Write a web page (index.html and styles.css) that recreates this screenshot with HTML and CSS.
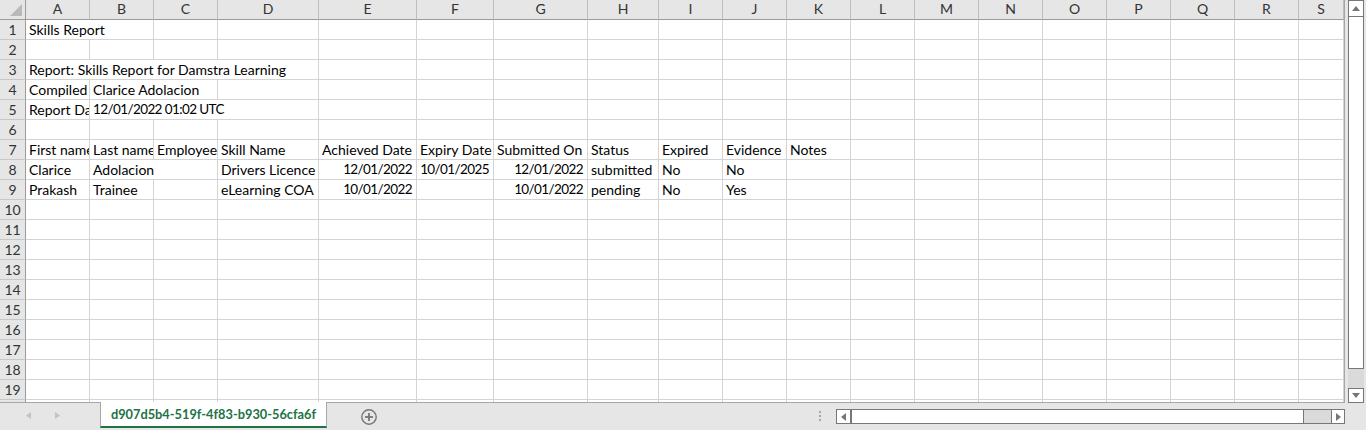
FILE: index.html
```html
<!DOCTYPE html>
<html lang="en">
<head>
    <meta charset="utf-8">
    <title>Skills Report</title>
    <link rel="stylesheet" href="styles.css">
</head>
<body>
<div class="main">
    <div class="sheet">
        <div class="grid" id="grid"></div>
    </div>
    <div class="vscroll">
        <div class="vbtn up">
            <svg width="8" height="5" viewBox="0 0 8 5"><polygon points="0,5 8,5 4,0" fill="#777"/></svg>
        </div>
        <div class="vthumb"></div>
        <div class="vtrack"></div>
        <div class="vbtn down">
            <svg width="8" height="5" viewBox="0 0 8 5"><polygon points="0,0 8,0 4,5" fill="#777"/></svg>
        </div>
    </div>
</div>
<div class="bottom">
    <div class="nav">
        <svg width="100" height="27" viewBox="0 0 100 27">
            <polygon points="31,9 31,16 26,12.5" fill="#c3c3c3"/>
            <polygon points="55,9 55,16 60,12.5" fill="#c3c3c3"/>
        </svg>
    </div>
    <div class="tab">d907d5b4-519f-4f83-b930-56cfa6f</div>
    <div class="addsheet">
        <svg width="16" height="16" viewBox="0 0 16 16">
            <circle cx="8" cy="8" r="7.2" fill="none" stroke="#767676" stroke-width="1.4"/>
            <rect x="4" y="7.1" width="8" height="1.8" fill="#767676"/>
            <rect x="7.1" y="4" width="1.8" height="8" fill="#767676"/>
        </svg>
    </div>
    <div class="hgroup">
        <div class="split"><i></i><i></i><i></i></div>
        <div class="hscroll">
            <div class="hbtn left">
                <svg width="5" height="8" viewBox="0 0 5 8"><polygon points="5,0 5,8 0,4" fill="#777"/></svg>
            </div>
            <div class="hthumb"></div>
            <div class="htrack"></div>
            <div class="hbtn right">
                <svg width="5" height="8" viewBox="0 0 5 8"><polygon points="0,0 0,8 5,4" fill="#777"/></svg>
            </div>
        </div>
    </div>
</div>
<script>
var letters = 'ABCDEFGHIJKLMNOPQRS'.split('');
// n: number (right aligned), d: date text, s: overflow span
var rows = {
    1: [{t:'Skills Report', s:2}],
    3: [{t:'Report: Skills Report for Damstra Learning', s:4}],
    4: ['Compiled By', {t:'Clarice Adolacion', s:2}],
    5: ['Report Date', {t:'12/01/2022 01:02 UTC', s:3, d:1}],
    7: ['First name','Last name','Employee ID','Skill Name','Achieved Date','Expiry Date','Submitted On','Status','Expired','Evidence Provided','Notes'],
    8: ['Clarice',{t:'Adolacion', s:2},'Drivers Licence',{t:'12/01/2022', n:1, d:1},{t:'10/01/2025', n:1, d:1},{t:'12/01/2022', n:1, d:1},'submitted','No','No'],
    9: ['Prakash','Trainee','','eLearning COA',{t:'10/01/2022', n:1, d:1},'',{t:'10/01/2022', n:1, d:1},'pending','No','Yes']
};
var grid = document.getElementById('grid');
function add(cls, text){
    var d = document.createElement('div');
    d.className = cls;
    if(text) d.textContent = text;
    grid.appendChild(d);
    return d;
}
add('hd corner').innerHTML = '<svg width="25" height="19" viewBox="0 0 25 19"><polygon points="10,16 22,16 22,4" fill="#b9b9b9"/></svg>';
letters.forEach(function(l){ add('hd', l); });
for(var r=1; r<=20; r++){
    add('rh', String(r));
    var col = 0;
    (rows[r] || []).forEach(function(c){
        if(typeof c == 'string') c = {t:c};
        var s = c.s || 1;
        add('c' + (c.n ? ' num' : '') + (c.d ? ' date' : '') + (s > 1 ? ' span' + s : ''), c.t);
        col += s;
    });
    while(col < 19){ add('c'); col++; }
}
</script>
</body>
</html>
```

FILE: styles.css
```css
* {
    box-sizing: border-box;
}
body {
    margin: 0;
    width: 1366px;
    height: 430px;
    overflow: hidden;
    background: #e6e6e6;
    font-family: Lato, "Liberation Sans", sans-serif;
    font-size: 14px;
    color: #000;
}
.main {
    display: flex;
    height: 403px;
}
.sheet {
    width: 1345px;
    height: 403px;
    overflow: hidden;
    background: #fff;
    border-right: 1px solid #a6a6a6;
    border-bottom: 1px solid #a6a6a6;
}
.grid {
    display: grid;
    grid-template-columns: 26px 64px 64px 64px 101px 98px 77px 94px 71px 64px 64px repeat(8, 64px) 45px;
    grid-auto-rows: 20px;
}
.c, .hd, .rh {
    border-right: 1px solid #d4d4d4;
    border-bottom: 1px solid #d4d4d4;
    white-space: nowrap;
    overflow: hidden;
    line-height: 19px;
}
.c {
    padding: 0 3px;
}
.num {
    text-align: right;
}
.date {
    font-size: 13.5px;
    letter-spacing: -0.6px;
}
.num.date {
    padding-right: 4px;
}
.span2 { grid-column: span 2; }
.span3 { grid-column: span 3; }
.span4 { grid-column: span 4; }
.hd {
    background: #e6e6e6;
    text-align: center;
    color: #333;
    border-right-color: #bdbdbd;
    border-bottom-color: #9b9b9b;
    line-height: 18px;
}
.corner {
    border-right-color: #9b9b9b;
}
.corner svg {
    display: block;
}
.rh {
    background: #e6e6e6;
    text-align: center;
    color: #333;
    border-right-color: #9b9b9b;
    border-bottom-color: #c8c8c8;
}

/* vertical scroll bar */
.vscroll {
    width: 21px;
    padding-left: 3px;
    padding-right: 2px;
    display: flex;
    flex-direction: column;
}
.vbtn {
    background: #fff;
    border: 1px solid #777;
    display: flex;
    align-items: center;
    justify-content: center;
}
.vbtn.up {
    height: 17px;
}
.vbtn.down {
    height: 15px;
}
.vthumb {
    height: 352px;
    background: #fff;
    border: 1px solid #777;
    border-top: none;
}
.vtrack {
    flex: 1;
    background: #dadada;
}

/* sheet tabs bar */
.bottom {
    display: flex;
    align-items: flex-start;
    height: 27px;
}
.nav {
    width: 100px;
    height: 27px;
}
.nav svg {
    display: block;
}
.tab {
    width: 227px;
    height: 26px;
    margin-top: -1px;
    background: #fff;
    border-left: 1px solid #a6a6a6;
    border-right: 1px solid #a6a6a6;
    border-bottom: 2px solid #217346;
    color: #217346;
    font-weight: bold;
    font-size: 12.8px;
    line-height: 24px;
    text-align: center;
}
.addsheet {
    margin-left: 34px;
    margin-top: 6px;
    width: 16px;
    height: 16px;
}
.addsheet svg {
    display: block;
}
.hgroup {
    margin-left: auto;
    margin-right: 21px;
    display: flex;
    align-items: flex-start;
}
.split {
    width: 2px;
    margin-top: 8px;
    margin-right: 15px;
    display: flex;
    flex-direction: column;
    gap: 2px;
}
.split i {
    display: block;
    width: 2px;
    height: 2px;
    background: #a6a6a6;
}
.hscroll {
    width: 509px;
    height: 15px;
    margin-top: 6px;
    display: flex;
    border: 1px solid #777;
    background: #dadada;
}
.hbtn {
    background: #fff;
    display: flex;
    align-items: center;
    justify-content: center;
}
.hbtn.left {
    width: 14px;
    border-right: 1px solid #777;
}
.hbtn.right {
    width: 13px;
    border-left: 1px solid #777;
}
.hthumb {
    width: 453px;
    background: #fff;
    border-left: 1px solid #777;
    border-right: 1px solid #777;
}
.htrack {
    flex: 1;
}
```
